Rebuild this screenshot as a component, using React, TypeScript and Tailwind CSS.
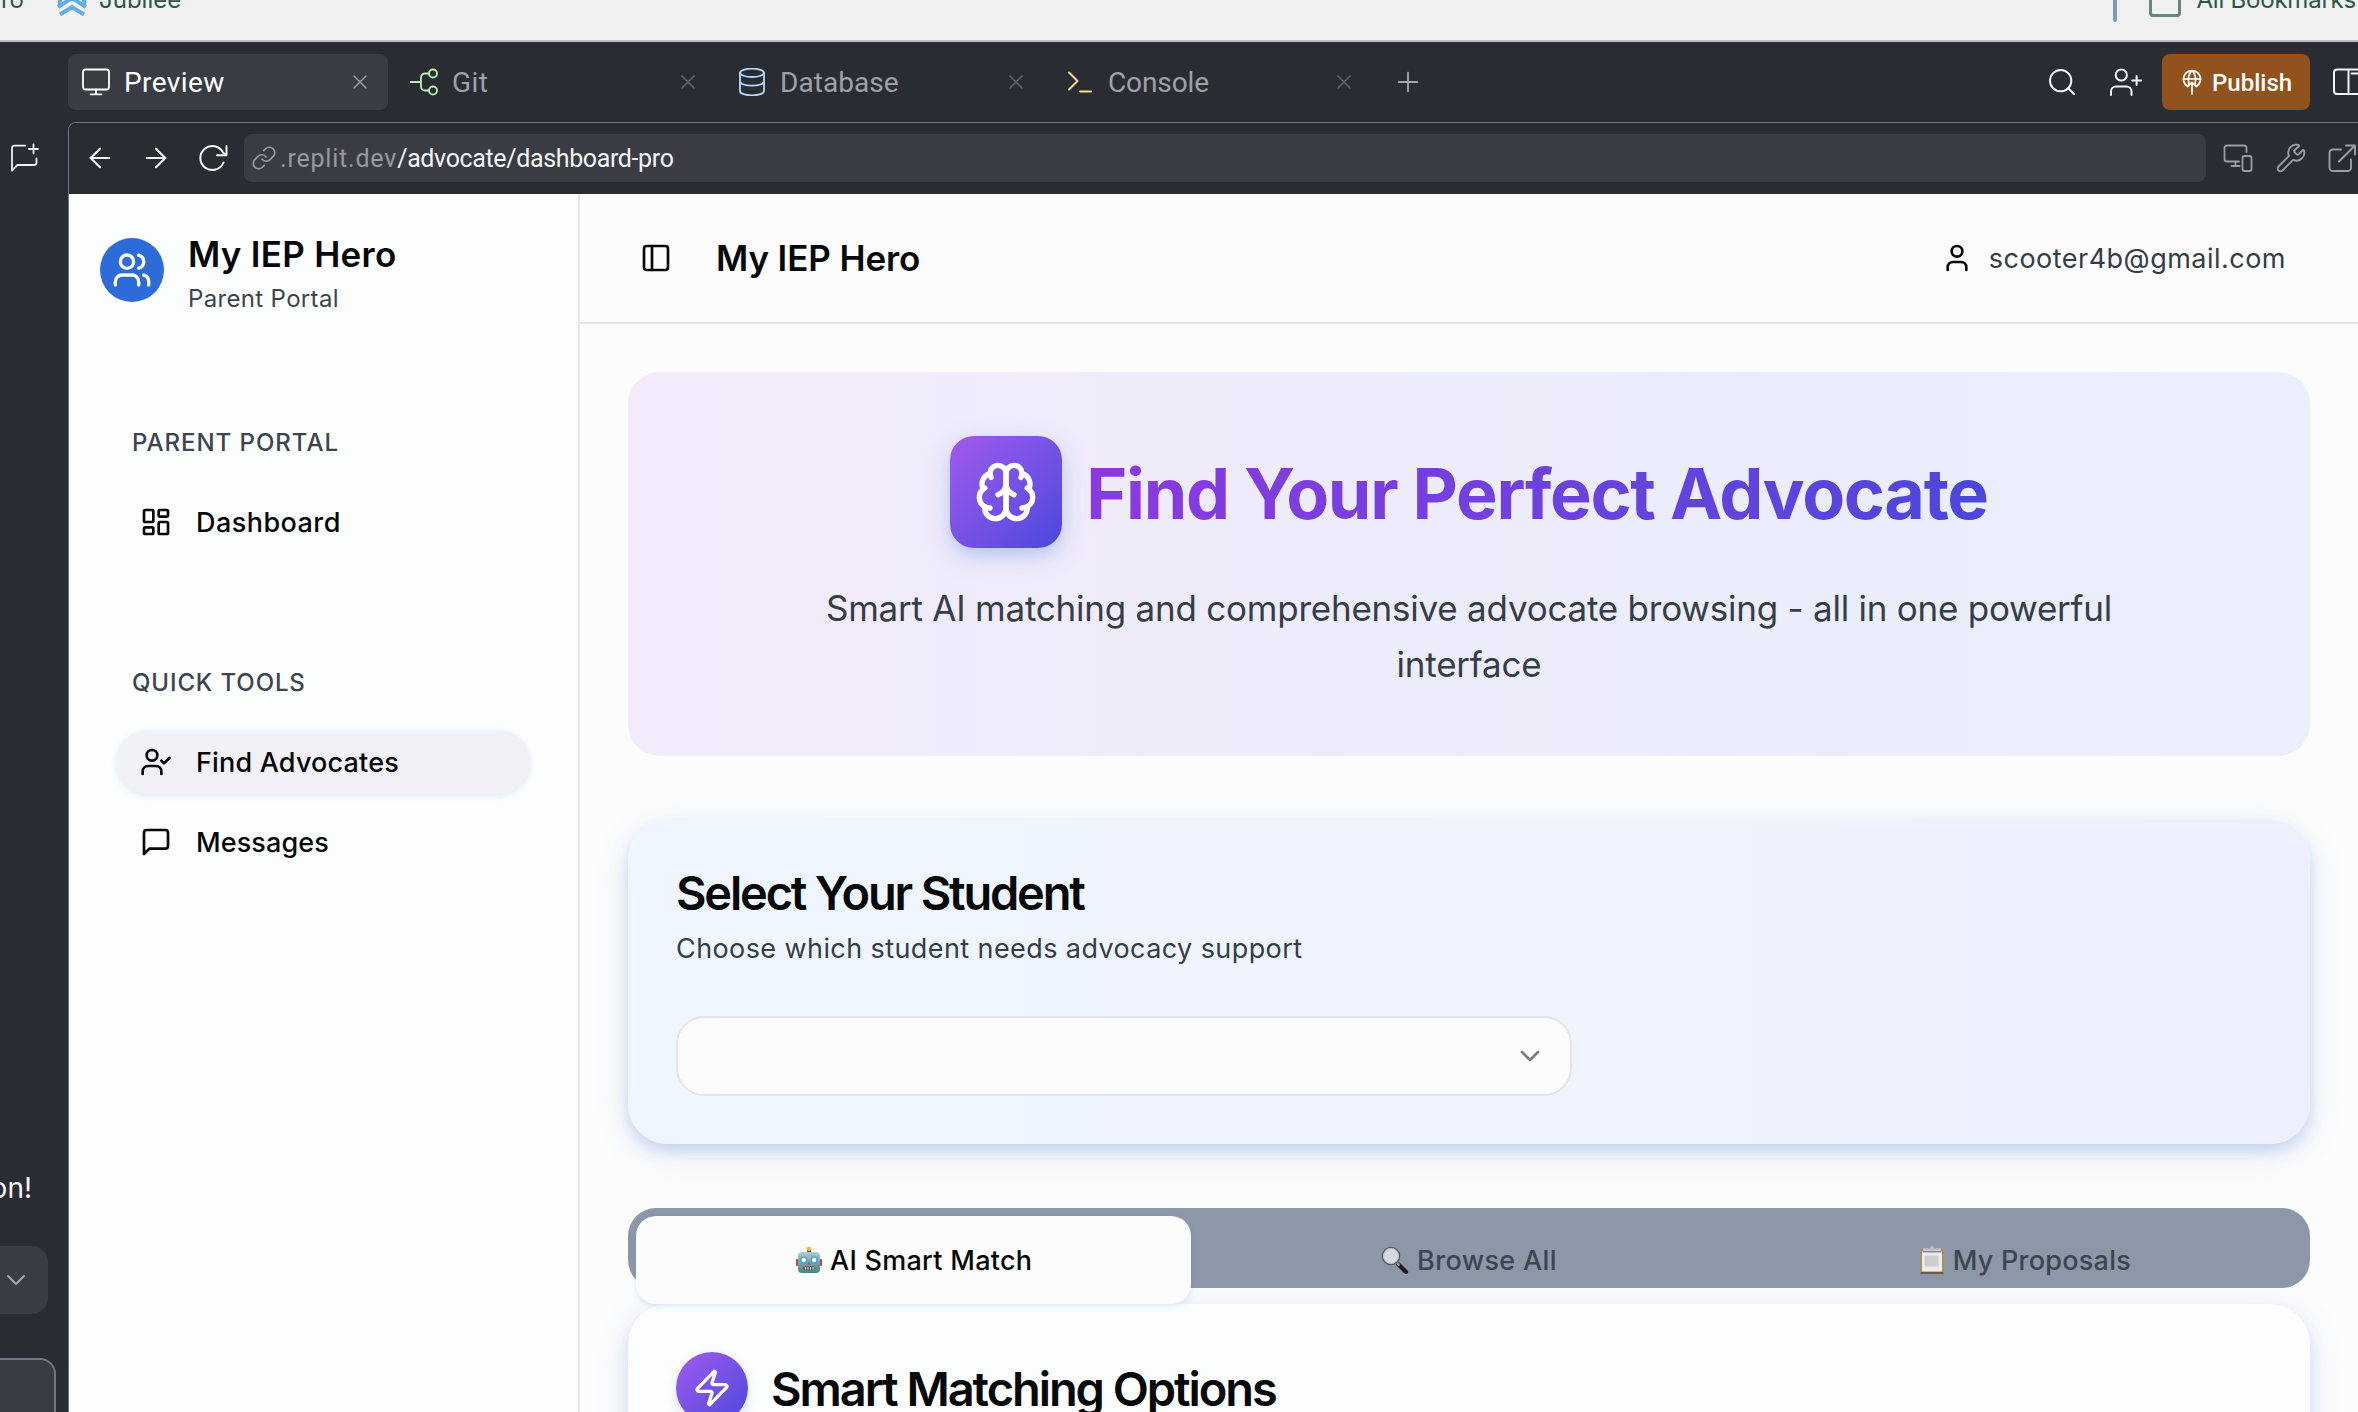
import React from 'react';
import {
  ArrowLeft,
  ArrowRight,
  ChevronDown,
  LayoutDashboard,
  PanelLeft,
  Plus,
  Search,
  User,
  UserCheck,
  Users,
  Wrench,
  X,
  Zap,
} from 'lucide-react';

type SvgProps = { className?: string; children: React.ReactNode; box?: string; sw?: number };

function Icon({ className, children, box = '0 0 32 32', sw = 2 }: SvgProps) {
  return (
    <svg
      viewBox={box}
      className={className}
      fill="none"
      stroke="currentColor"
      strokeWidth={sw}
      strokeLinecap="round"
      strokeLinejoin="round"
    >
      {children}
    </svg>
  );
}

const BrainIcon = () => (
  <Icon box="0 0 24 24" className="size-16 text-white">
    <path d="M12 5a3 3 0 1 0-5.997.125 4 4 0 0 0-2.526 5.77 4 4 0 0 0 .556 6.588A4 4 0 1 0 12 18Z" />
    <path d="M12 5a3 3 0 1 1 5.997.125 4 4 0 0 1 2.526 5.77 4 4 0 0 1-.556 6.588A4 4 0 1 1 12 18Z" />
    <path d="M15 13a4.5 4.5 0 0 1-3-4 4.5 4.5 0 0 1-3 4" />
    <path d="M17.599 6.5a3 3 0 0 0 .399-1.375" />
    <path d="M6.003 5.125A3 3 0 0 0 6.401 6.5" />
    <path d="M3.477 10.896a4 4 0 0 1 .585-.396" />
    <path d="M19.938 10.5a4 4 0 0 1 .585.396" />
    <path d="M6 18a4 4 0 0 1-1.967-.516" />
    <path d="M19.967 17.484A4 4 0 0 1 18 18" />
  </Icon>
);

const RobotEmoji = () => (
  <svg viewBox="0 0 28 28" className="size-7">
    <defs>
      <linearGradient id="bot" x1="0" y1="0" x2="0" y2="1">
        <stop offset="0" stopColor="#a9cdd2" />
        <stop offset="1" stopColor="#4d7f88" />
      </linearGradient>
    </defs>
    <rect x="1" y="13" width="3" height="7" rx="1" fill="#c4453c" />
    <rect x="24" y="13" width="3" height="7" rx="1" fill="#c4453c" />
    <rect x="12" y="3" width="4" height="4" fill="#5b4b86" />
    <circle cx="14" cy="2.8" r="2.3" fill="#f5b942" />
    <path d="M3 9.5Q3 6 8 6h12q5 0 5 3.500V23q0 4-4 4H7q-4 0-4-4Z" fill="url(#bot)" />
    <circle cx="8.800" cy="14" r="3.600" fill="#3fa7cf" />
    <circle cx="19.200" cy="14" r="3.600" fill="#3fa7cf" />
    <circle cx="8.800" cy="14" r="2.200" fill="#fff" />
    <circle cx="19.200" cy="14" r="2.200" fill="#fff" />
    <path d="M14 15l1.800 3.500h-3.600Z" fill="#d9483b" />
    <rect x="8.500" y="20.500" width="11" height="3.500" rx="1" fill="#4a4f55" />
    <path d="M10.500 21v2.500M13 21v2.500M15.500 21v2.500M18 21v2.500" stroke="#f2f2f2" strokeWidth="1.100" />
  </svg>
);

const MagnifierEmoji = () => (
  <svg viewBox="0 0 28 28" className="size-7">
    <path d="M17 18l8 8" stroke="#1b1b1d" strokeWidth="4.200" strokeLinecap="round" />
    <path d="M15.500 16l3 3.500" stroke="#9a9a9a" strokeWidth="2.500" />
    <circle cx="10" cy="10" r="8.600" fill="#d6dbde" stroke="#55595c" strokeWidth="1.400" />
    <circle cx="10" cy="10" r="7.400" fill="none" stroke="#b9bfc3" strokeWidth="1" />
  </svg>
);

const ClipboardEmoji = () => (
  <svg viewBox="0 0 28 28" className="size-7">
    <rect x="2.500" y="3" width="23" height="25" rx="1.500" fill="#b08a52" />
    <rect x="2.500" y="26" width="23" height="2" rx="1" fill="#7d5726" />
    <rect x="4" y="5" width="20" height="20.500" fill="#ececec" />
    <rect x="6.500" y="9.500" width="14" height="11" fill="#cdcdcd" />
    <rect x="4.500" y="4.500" width="19" height="2" fill="#8c8c8c" />
    <path d="M5 2.500h18V5H5Z" fill="#c5c8ca" />
    <rect x="12" y="0" width="4" height="4" rx="1.500" fill="#b7bcc0" />
  </svg>
);

const tabs = [
  {
    name: 'Preview',
    active: true,
    spacing: 'tracking-[0.4px]',
    icon: (
      <Icon box="0 0 28 28" className="size-7 text-white" sw={1.8}>
        <rect x="1" y="1.500" width="26" height="20" rx="2.500" />
        <path d="M14 21.500v4.500M8.500 26.300h11" />
      </Icon>
    ),
  },
  {
    name: 'Git',
    active: false,
    spacing: 'tracking-[0.4px]',
    icon: (
      <Icon box="0 0 28 28" className="size-7 text-[#b6f5b0]" sw={1.8}>
        <path d="M0.800 14H11M19 5.500h-4a4 4 0 0 0-4 4v9a4 4 0 0 0 4 4h4" />
        <circle cx="23" cy="5.500" r="4" />
        <circle cx="23" cy="22.500" r="4" />
      </Icon>
    ),
  },
  {
    name: 'Database',
    active: false,
    spacing: 'tracking-[0.05px]',
    icon: (
      <Icon box="0 0 28 28" className="size-7 text-[#b7d6fb]" sw={1.8}>
        <ellipse cx="14" cy="4.800" rx="12" ry="4.200" />
        <path d="M2 4.800v18.400c0 2.400 5.400 4.200 12 4.200s12-1.800 12-4.200V4.800M2 13.500c0 2.400 5.400 4.200 12 4.200s12-1.800 12-4.200" />
      </Icon>
    ),
  },
  {
    name: 'Console',
    active: false,
    spacing: 'tracking-[-0.1px]',
    icon: (
      <Icon box="0 0 28 28" className="size-7 text-[#f7dd93]" sw={2}>
        <path d="M3 4.500l8.500 8.500L3 21.500M14 23.500h11" />
      </Icon>
    ),
  },
];

function BookmarksBar() {
  return (
    <div className="h-[42px] shrink-0 overflow-hidden border-b-2 border-[#bcc1c3] bg-[#f0f0f0]">
      <div className="-mt-3 flex h-6 items-center text-[24px] leading-6 text-[#2b5748]">
        <span className="flex w-6 justify-end">ro</span>
        <Icon box="0 0 30 34" className="ml-[33px] h-[34px] w-[30px] shrink-0 text-[#62ade2]" sw={4}>
          <path strokeLinejoin="miter" strokeLinecap="butt" d="M1 15l14-9 14 9M1 24l14-9 14 9M3 31.500l12-7.500 12 7.500M3 16v8M27 16v8" />
        </Icon>
        <span className="ml-3">Jubilee</span>
        <span className="ml-auto mt-2 h-9 w-1 rounded-full bg-[#7d9db0]" />
        <span className="ml-8 mt-3 h-[22px] w-8 rounded-[4px] border-[3px] border-[#66887a]" />
        <span className="ml-4 mr-[2px] tracking-[-0.22px]">All Bookmarks</span>
      </div>
    </div>
  );
}

function ChatRail() {
  return (
    <div className="flex w-[68px] shrink-0 flex-col items-start overflow-hidden pt-[101px]">
      <Icon box="0 0 28 28" className="ml-[11px] h-[29px] w-7 shrink-0 text-[#f0f1f3]" sw={1.8}>
        <path d="M14 2.200H3.500a2.500 2.500 0 0 0-2.500 2.500V27l5.500-5.500H23a2.500 2.500 0 0 0 2.500-2.500v-4M22.500 1v9M18 5.500h9" />
      </Icon>
      <div className="mt-[996px] flex h-10 w-8 shrink-0 items-center justify-end text-[28px] text-[#f5f6f7]">on!</div>
      <div className="mt-[38px] flex h-[68px] w-12 shrink-0 items-center rounded-r-2xl bg-[#3a3c44]">
        <ChevronDown className="size-8 shrink-0 text-[#a6a8ac]" strokeWidth={1.5} />
      </div>
      <div className="mt-11 h-20 w-14 shrink-0 rounded-tr-2xl border-r-2 border-t-2 border-[#70748c] bg-[#3a3c44]" />
    </div>
  );
}

function TabBar() {
  return (
    <div className="flex h-20 shrink-0 items-start pt-3 font-[Roboto,sans-serif]">
      <div className="flex gap-2">
        {tabs.map((t) => (
          <div
            key={t.name}
            className={`flex h-14 w-80 items-center rounded-lg pl-[14px] pr-4 ${t.active ? 'bg-[#3a3c44] text-white' : 'text-[#9fa1a5]'}`}
          >
            {t.icon}
            <span className={`ml-[14px] mt-[2px] text-[28px] leading-10 ${t.spacing}`}>{t.name}</span>
            <X className={`ml-auto size-6 ${t.active ? 'text-[#a0a2a6]' : 'text-[#696b72]'}`} strokeWidth={1.4} />
          </div>
        ))}
      </div>
      <div className="ml-5 flex h-14 items-center">
        <Plus className="size-8 text-[#a6a8ab]" strokeWidth={1.4} />
      </div>
      <div className="ml-auto flex h-14 shrink-0 items-center">
        <Search className="size-8 text-[#f3f4f5]" strokeWidth={1.5} />
        <Icon box="0 0 34 28" className="ml-[31px] h-7 w-[34px] text-[#f3f4f5]">
          <circle cx="12.300" cy="7" r="5.600" />
          <path d="M2 27v-3.500a5 5 0 0 1 5-5h10.500a5 5 0 0 1 5 5V27M27.600 8v9M23.200 12.500h9" />
        </Icon>
        <div className="ml-[19px] flex h-14 w-[148px] items-center rounded-lg bg-[#91521c] pl-5 text-[24px] text-white">
          <Icon box="0 0 20 26" className="h-[26px] w-5" sw={1.7}>
            <path d="M5.500 17.300A8.500 8.500 0 1 1 14.500 17.300M1.600 9.800h16.800M7 15C5.400 9.500 7 4 10 1.500 13 4 14.600 9.500 13 15M10 25V13.500M5.500 17.500l4.500-4 4.500 4" />
          </Icon>
          <span className="ml-[10px] mt-px font-medium">Publish</span>
        </div>
        <div className="flex w-12 overflow-hidden">
          <Icon box="0 0 36 28" className="ml-[22px] h-7 w-9 shrink-0 text-[#f3f4f5]">
            <rect x="2" y="1.500" width="30" height="24.500" rx="3" />
            <path d="M16.500 2v24M19.500 5.500h8" />
          </Icon>
        </div>
      </div>
    </div>
  );
}

function UrlBar() {
  return (
    <div className="flex h-[71px] shrink-0 items-center overflow-hidden bg-[#2a2c34] pb-[1px] font-[Roboto,sans-serif] text-[#f5f5f6]">
      <ArrowLeft className="ml-[15px] size-8 shrink-0" strokeWidth={1.6} />
      <ArrowRight className="ml-6 size-8 shrink-0" strokeWidth={1.6} />
      <Icon box="0 0 30 28" className="ml-[26px] h-7 w-[30px] shrink-0" sw={2}>
        <path d="M25.500 18.500A12 12 0 1 1 25 8.500L28 11M28.500 2v9.300H19" />
      </Icon>
      <div className="ml-4 flex h-12 w-[1962px] shrink-0 items-center rounded-lg bg-[#3a3c44] text-[25px]">
        <Icon box="0 0 24 24" className="ml-[7px] size-[26px] text-[#9a9ca1]" sw={1.5}>
          <path d="M10 13a5 5 0 0 0 7.540.540l3-3a5 5 0 0 0-7.070-7.070l-1.720 1.710" />
          <path d="M14 11a5 5 0 0 0-7.540-.540l-3 3a5 5 0 0 0 7.070 7.070l1.710-1.710" />
        </Icon>
        <span className="ml-[3px] mt-[2px] tracking-[0.8px] text-[#97999e]">.replit.dev</span>
        <span className="mt-[2px] tracking-[-0.36px]">/advocate/dashboard-pro</span>
      </div>
      <Icon box="0 0 30 28" className="ml-[17px] h-7 w-[30px] shrink-0 text-[#9c9ea3]" sw={1.8}>
        <path d="M23.500 8V4a2.500 2.500 0 0 0-2.500-2.500H4A2.500 2.500 0 0 0 1.500 4v11A2.500 2.500 0 0 0 4 17.500h12M12.500 17.500V22M8.500 22h8" />
        <rect x="19.500" y="12" width="9" height="15" rx="2" />
      </Icon>
      <Wrench className="ml-[22px] size-8 shrink-0 text-[#9c9ea3]" strokeWidth={1.4} />
      <Icon box="0 0 28 28" className="ml-[21px] size-7 shrink-0 text-[#9c9ea3]" sw={1.9}>
        <path d="M13 5.500H5A3.500 3.500 0 0 0 1.500 9v14.500A3.500 3.500 0 0 0 5 27h14.500a3.500 3.500 0 0 0 3.500-3.500V15.500M18 1.500h9v9M27 1.500L11 17.500" />
      </Icon>
    </div>
  );
}

function NavItem({ icon, label, spacing, active = false }: { icon: React.ReactNode; label: string; spacing: string; active?: boolean }) {
  return (
    <div
      className={`ml-[47px] flex h-16 w-[414px] items-center rounded-full pl-6 text-[27px] font-medium text-[#070809] ${active ? 'bg-[#f1f1f6] shadow-[0_2px_6px_rgba(45,107,216,0.14)]' : ''}`}
    >
      {icon}
      <span className={`ml-6 mt-[3px] ${spacing}`}>{label}</span>
    </div>
  );
}

function Sidebar() {
  return (
    <div className="w-[511px] shrink-0 border-r-2 border-[#e6e8ec] bg-[#fcfefd]">
      <div className="flex pl-[31px] pt-9">
        <div className="mt-2 flex size-16 items-center justify-center rounded-full bg-[#2d6bd8]">
          <Users className="size-10 text-white" strokeWidth={2} />
        </div>
        <div className="ml-6">
          <div className="text-[35px] font-semibold leading-[48px] tracking-[0.28px] text-[#070809]">My IEP Hero</div>
          <div className="mt-px text-[24px] leading-10 tracking-[0.34px] text-[#3b444f]">Parent Portal</div>
        </div>
      </div>
      <div className="ml-[63px] mt-[104px] text-[24px] font-medium leading-10 tracking-[0.97px] text-[#3b444f]">PARENT PORTAL</div>
      <div className="mt-[27px]">
        <NavItem icon={<LayoutDashboard className="size-8" />} label="Dashboard" spacing="tracking-[0.45px]" />
      </div>
      <div className="ml-[63px] mt-[109px] text-[24px] font-medium leading-10 tracking-[0.88px] text-[#3b444f]">QUICK TOOLS</div>
      <div className="mt-[27px] flex flex-col gap-4">
        <NavItem active icon={<UserCheck className="size-8" />} label="Find Advocates" spacing="tracking-[0.18px]" />
        <NavItem
          icon={
            <Icon box="0 0 24 24" className="size-8">
              <path d="M21 15a2 2 0 0 1-2 2H7l-4 4V5a2 2 0 0 1 2-2h14a2 2 0 0 1 2 2z" />
            </Icon>
          }
          label="Messages"
          spacing="tracking-[0.1px]"
        />
      </div>
    </div>
  );
}

function Hero() {
  return (
    <div className="h-96 shrink-0 rounded-[32px] bg-[linear-gradient(90deg,#f3ebfb_0%,#f1ebfa_12%,#eeecfa_40%,#ebedfa_70%,#eaeffb_100%)] pt-16">
      <div className="flex items-start justify-center gap-6">
        <div className="flex size-28 items-center justify-center rounded-3xl bg-linear-to-br from-[#a05aee] to-[#4c46dc] shadow-[0_8px_30px_rgba(45,107,216,0.16),0_8px_12px_rgba(45,107,216,0.14)]">
          <BrainIcon />
        </div>
        <h1 className="mt-[14px] bg-linear-to-r from-[#8b38e0] to-[#4c46dc] bg-clip-text text-[70px] font-bold leading-[88px] tracking-[-1.31px] text-transparent">
          Find Your Perfect Advocate
        </h1>
      </div>
      <p className="mx-auto mt-8 w-[1344px] text-center text-[35px] leading-[56px] tracking-[-0.23px] text-[#343d48]">
        Smart AI matching and comprehensive advocate browsing - all in one powerful interface
      </p>
    </div>
  );
}

function StudentCard() {
  return (
    <div className="mt-16 h-[324px] shrink-0 rounded-[40px] bg-[linear-gradient(90deg,#f0f6ff_0%,#eff4fe_55%,#eeeffd_100%)] px-12 pt-[49px] shadow-[0_8px_36px_rgba(45,107,216,0.12),0_8px_14px_rgba(45,107,216,0.18)]">
      <h2 className="text-[47px] font-semibold leading-[48px] tracking-[-2.2px] text-[#070809]">Select Your Student</h2>
      <p className="mt-3 text-[27px] leading-10 tracking-[0.41px] text-[#343d48]">Choose which student needs advocacy support</p>
      <div className="mt-[47px] flex h-20 w-[896px] items-center justify-end rounded-[28px] border-2 border-[#e2e5e9] bg-[#fcfcfc] pr-6">
        <ChevronDown className="size-8 text-[#7d7d7d]" />
      </div>
    </div>
  );
}

function MatchTabs() {
  return (
    <div className="relative z-10 mt-16 grid h-20 shrink-0 grid-cols-3 rounded-[28px] bg-[#8c98a8] p-2 text-[27px] font-medium text-[#3b4650]">
      <div className="flex h-[88px] items-center justify-center rounded-[20px] bg-[#fcfcfc] tracking-[0.28px] text-[#070809] shadow-[0_2px_6px_rgba(45,107,216,0.16)]">
        <RobotEmoji />
        <span className="ml-[7px] mt-[3px]">AI Smart Match</span>
      </div>
      <div className="flex h-[88px] items-center justify-center tracking-[0.35px]">
        <MagnifierEmoji />
        <span className="ml-2 mt-[3px]">Browse All</span>
      </div>
      <div className="flex h-[88px] items-center justify-center tracking-[0.25px]">
        <ClipboardEmoji />
        <span className="ml-[7px] mt-[3px]">My Proposals</span>
      </div>
    </div>
  );
}

function OptionsCard() {
  return (
    <div className="mt-4 h-[300px] shrink-0 rounded-[40px] bg-[#fcfefd] px-12 pt-12 shadow-[0_8px_36px_rgba(45,107,216,0.12),0_8px_14px_rgba(45,107,216,0.16)]">
      <div className="flex items-start">
        <div className="flex size-[72px] items-center justify-center rounded-full bg-linear-to-br from-[#a05aee] to-[#4c46dc] shadow-[0_4px_12px_rgba(45,107,216,0.2)]">
          <Zap className="size-10 text-white" />
        </div>
        <h2 className="ml-[23px] text-[47px] font-semibold leading-[74px] tracking-[-2.07px] text-[#070809]">Smart Matching Options</h2>
      </div>
    </div>
  );
}

export default function App() {
  return (
    <div className="flex h-[1412px] w-[2358px] flex-col overflow-hidden whitespace-nowrap bg-[#2a2c34] font-[Inter,sans-serif]">
      <BookmarksBar />
      <div className="flex min-h-0 flex-1">
        <ChatRail />
        <div className="flex min-w-0 flex-1 flex-col">
          <TabBar />
          <div className="flex min-h-0 flex-1 flex-col overflow-hidden rounded-tl-lg border-l border-t border-[#70748c]">
            <UrlBar />
            <div className="flex min-h-0 flex-1">
              <Sidebar />
              <div className="flex min-w-0 flex-1 flex-col overflow-hidden bg-[#fcfcfc]">
                <header className="flex h-[130px] shrink-0 items-center border-b-2 border-[#e2e6ea] pl-[60px] pr-[72px]">
                  <PanelLeft className="size-8 text-[#070809]" />
                  <span className="ml-11 text-[35px] font-semibold tracking-[-0.12px] text-[#070809]">My IEP Hero</span>
                  <User className="ml-auto size-8 text-[#070809]" />
                  <span className="ml-4 mt-[2px] text-[27px] tracking-[0.48px] text-[#343d48]">scooter4b@gmail.com</span>
                </header>
                <div className="flex min-h-0 flex-1 flex-col overflow-hidden whitespace-normal px-12 pt-12">
                  <Hero />
                  <StudentCard />
                  <MatchTabs />
                  <OptionsCard />
                </div>
              </div>
            </div>
          </div>
        </div>
      </div>
    </div>
  );
}
